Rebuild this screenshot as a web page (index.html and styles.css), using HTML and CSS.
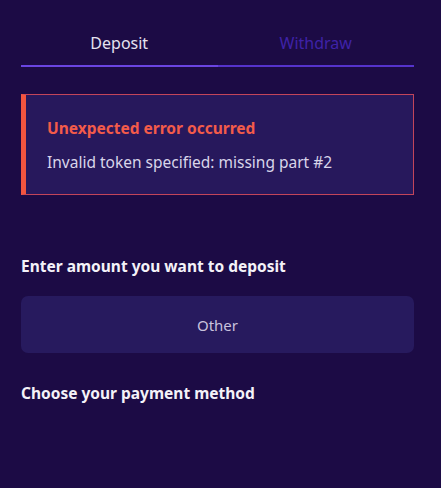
FILE: index.html
```html
<!DOCTYPE html>
<html>
<head>
<meta charset="utf-8">
<link rel="stylesheet" href="styles.css">
</head>
<body>
<div class="page">
  <div class="tabs">
    <div class="tab active">Deposit</div>
    <div class="tab">Withdraw</div>
  </div>
  <div class="error">
    <div class="error-title">Unexpected error occurred</div>
    <div class="error-msg">Invalid token specified: missing part #2</div>
  </div>
  <div class="label amount-label">Enter amount you want to deposit</div>
  <div class="other">Other</div>
  <div class="label method-label">Choose your payment method</div>
</div>
</body>
</html>
```
FILE: styles.css
```css
html, body {
  margin: 0;
  padding: 0;
  background: #1c0b45;
  height: 100%;
}
body {
  font-family: "Noto Sans", "Open Sans", sans-serif;
  color: #ffffff;
}
.page {
  width: 393px;
  padding: 0 27px 0 21px;
}
.tabs {
  display: flex;
  padding-top: 31px;
}
.tab {
  flex: 1;
  text-align: center;
  font-size: 16px;
  line-height: 24px;
  padding-bottom: 10px;
  color: #3f22a8;
  border-bottom: 2px solid #5533cc;
}
.tab.active {
  color: #e6e2f0;
  border-bottom-color: #6a45e2;
}
.error {
  margin-top: 27px;
  background: #27185c;
  border: 1px solid #c2455a;
  border-left: 5px solid #f2553f;
  padding: 22px 20px 21px 21px;
}
.error-title {
  color: #f35b4a;
  font-weight: 700;
  font-size: 15.5px;
  line-height: 22px;
}
.error-msg {
  margin-top: 12px;
  color: #d9d5ea;
  font-size: 15.5px;
  line-height: 22px;
}
.label {
  font-weight: 700;
  font-size: 15.5px;
  line-height: 22px;
  color: #f4f2f8;
}
.amount-label {
  margin-top: 60px;
}
.other {
  margin-top: 19px;
  height: 57px;
  background: #271a5e;
  border-radius: 7px;
  display: flex;
  align-items: center;
  justify-content: center;
  font-size: 15px;
  color: #c9c2dd;
}
.method-label {
  margin-top: 29px;
}
```
